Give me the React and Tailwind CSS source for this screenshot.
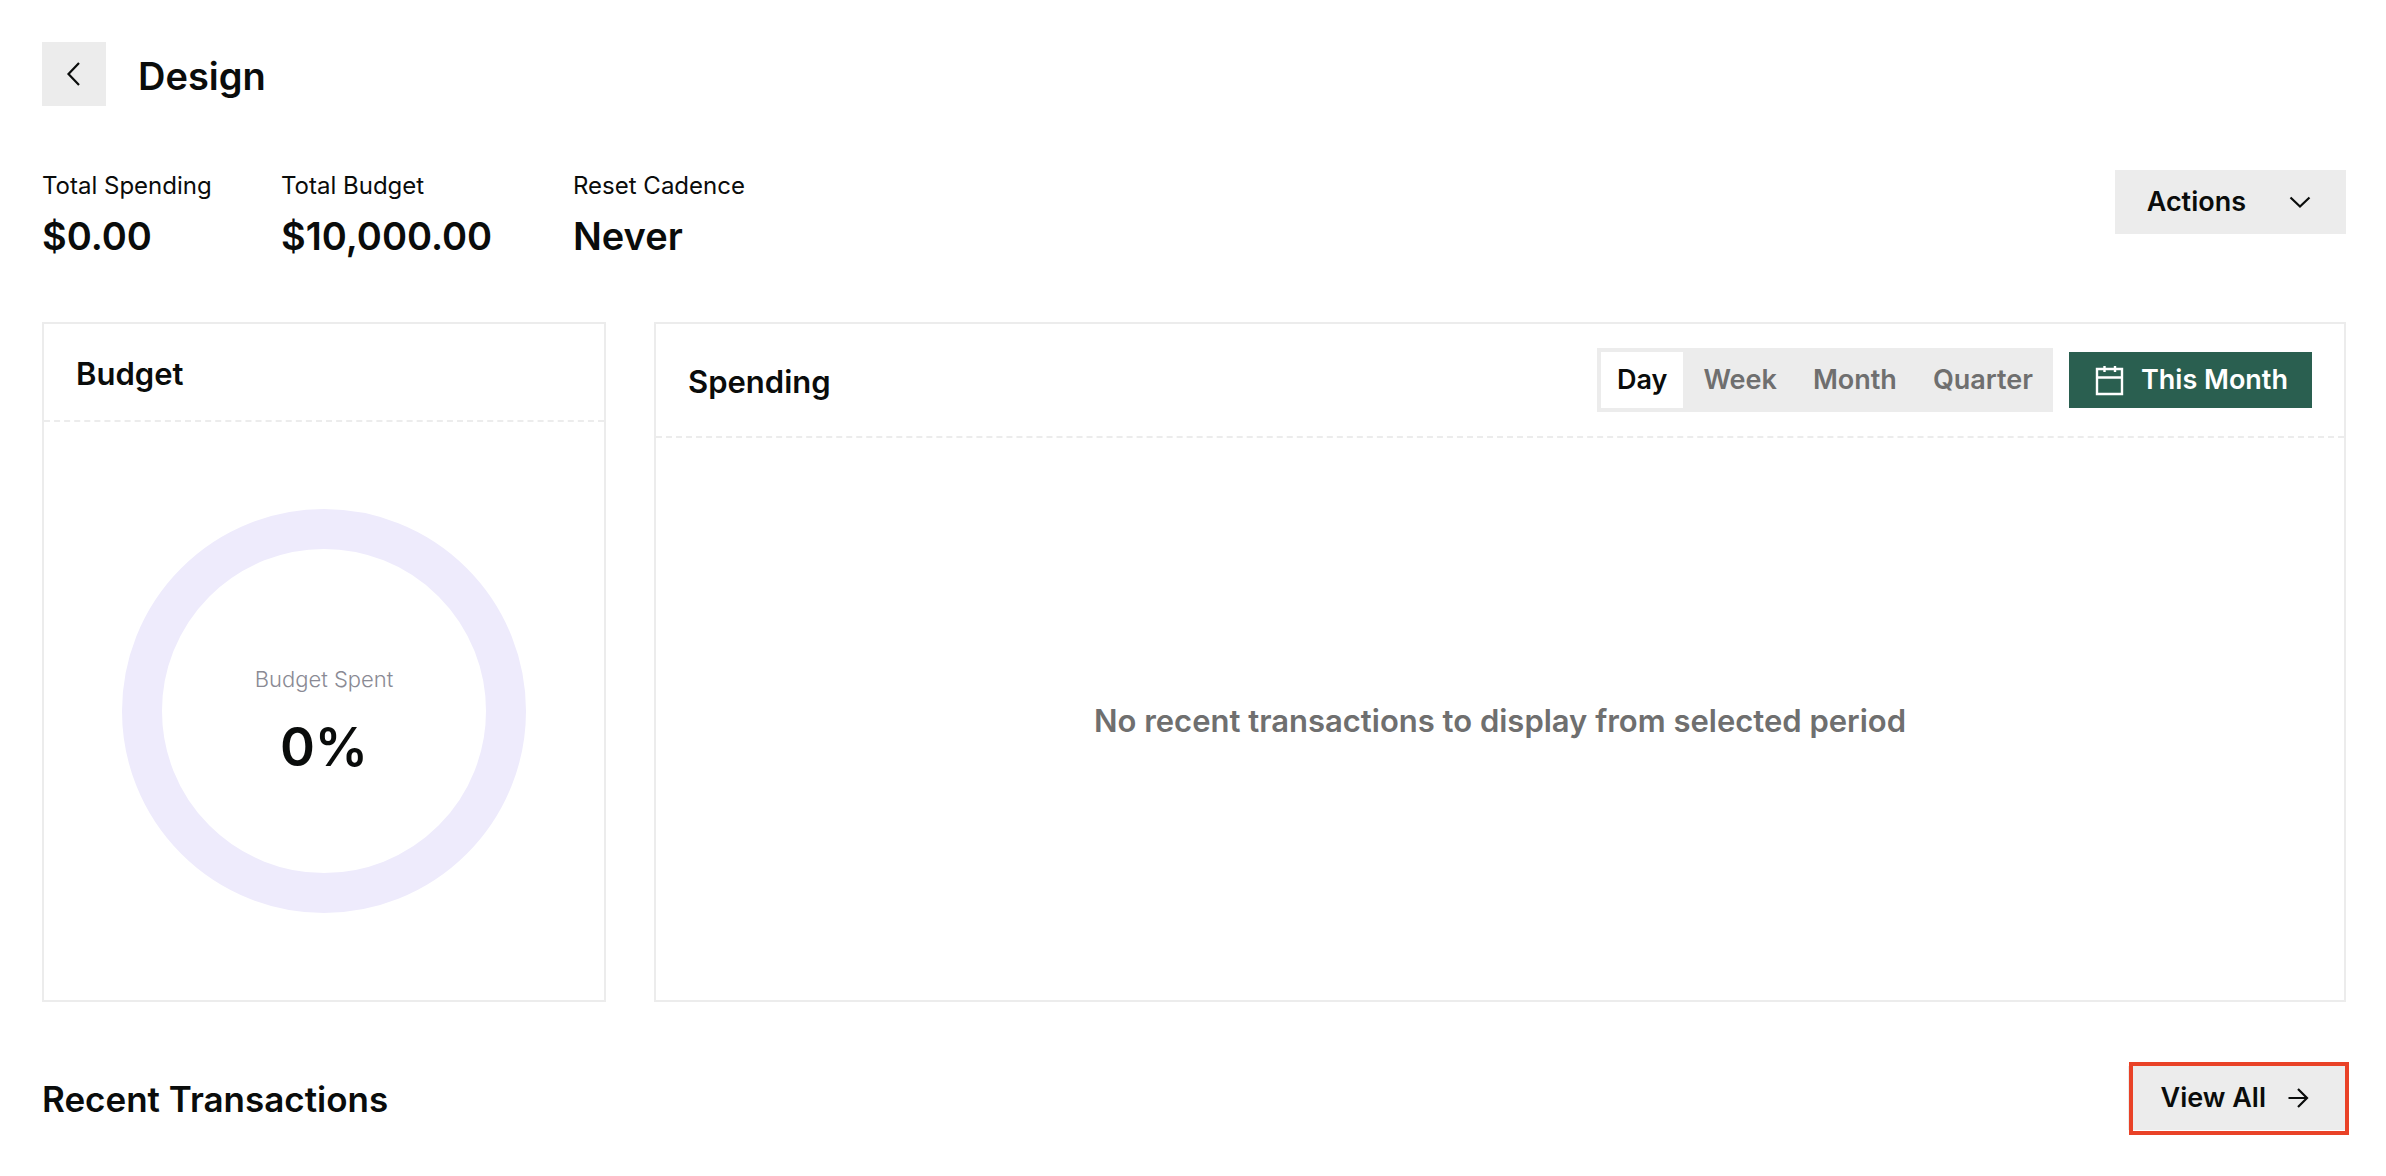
import React, { useState } from 'react';

const stats = [
  { label: 'Total Spending', value: '$0.00', width: 'min-w-[239px]' },
  { label: 'Total Budget', value: '$10,000.00', width: 'min-w-[292px]' },
  { label: 'Reset Cadence', value: 'Never', width: '' },
];

const periods = ['Day', 'Week', 'Month', 'Quarter'];

const ChevronLeft = () => (
  <svg className="size-8" viewBox="0 0 32 32" fill="none" stroke="currentColor" strokeWidth="2.2">
    <path d="M21 5 10.5 16 21 27" />
  </svg>
);

const ChevronDown = () => (
  <svg className="size-8" viewBox="0 0 32 32" fill="none" stroke="currentColor" strokeWidth="2.2">
    <path d="m6.5 11.5 9.5 9 9.5-9" />
  </svg>
);

const ArrowRight = () => (
  <svg className="size-8" viewBox="0 0 32 32" fill="none" stroke="currentColor" strokeWidth="2.2">
    <path d="M6.5 16H25M16 7l9 9-9 9" />
  </svg>
);

const CalendarIcon = () => (
  <svg className="size-8" viewBox="0 0 32 32" fill="none" stroke="currentColor" strokeWidth="2.4">
    <path d="M4 5h25v25H4zM4 13.5h25M11.5 2v6M22 2v6" />
  </svg>
);

const BudgetCard = () => (
  <section className="flex w-[564px] shrink-0 flex-col border-2 border-[#ececec]">
    <header className="border-b-2 border-dashed border-[#ececec] px-8 py-7">
      <h2 className="pt-1 text-[31px] leading-9 font-semibold">Budget</h2>
    </header>
    <div className="relative flex flex-1 items-center justify-center">
      <svg className="size-[404px]" viewBox="0 0 404 404" fill="none">
        <circle cx="202" cy="202" r="182" stroke="#eeebfc" strokeWidth="40" />
      </svg>
      <div className="absolute inset-0 flex flex-col items-center justify-center gap-4 pt-6">
        <p className="text-[22px] leading-8 font-light text-[#8a8a94]">Budget Spent</p>
        <p className="text-[53px] leading-[72px] font-semibold">0%</p>
      </div>
    </div>
  </section>
);

const SpendingCard = () => {
  const [period, setPeriod] = useState('Day');

  return (
    <section className="flex flex-1 flex-col border-2 border-[#ececec]">
      <header className="flex items-center justify-between border-b-2 border-dashed border-[#ececec] px-8 py-6">
        <h2 className="pt-1 text-[31px] leading-9 font-semibold">Spending</h2>
        <div className="flex items-center gap-4">
          <div className="flex gap-1 bg-[#ececec] p-1">
            {periods.map((p) => (
              <button
                key={p}
                type="button"
                onClick={() => setPeriod(p)}
                className={`h-14 px-4 text-[27px] font-semibold ${period === p ? 'bg-white' : 'text-[#6f6f6f]'}`}
              >
                {p}
              </button>
            ))}
          </div>
          <button type="button" className="flex h-14 items-center gap-4 bg-[#2a5f50] px-6 text-[27px] font-semibold text-white">
            <CalendarIcon />
            This Month
          </button>
        </div>
      </header>
      <div className="flex flex-1 items-center justify-center">
        <p className="pt-1 text-[31px] leading-9 font-semibold text-[#6f6f6f]">
          No recent transactions to display from selected period
        </p>
      </div>
    </section>
  );
};

const App = () => {
  return (
    <main className="min-h-screen bg-white pt-[42px] pr-10 pl-[42px] font-['Inter',sans-serif] text-[#0a0c0b]">
      <div className="flex items-center gap-8">
        <button type="button" aria-label="Back" className="flex size-16 items-center justify-center bg-[#ececec]">
          <ChevronLeft />
        </button>
        <h1 className="pt-1 text-[38px] leading-[48px] font-semibold">Design</h1>
      </div>

      <div className="mt-16 flex items-start justify-between">
        <dl className="flex">
          {stats.map((s) => (
            <div key={s.label} className={s.width}>
              <dt className="text-[24px] leading-8">{s.label}</dt>
              <dd className="mt-2.5 text-[38px] leading-[48px] font-semibold">{s.value}</dd>
            </div>
          ))}
        </dl>
        <button type="button" className="flex h-16 items-center gap-9.5 bg-[#ececec] pr-[30px] pl-8 text-[27px] font-semibold">
          Actions
          <ChevronDown />
        </button>
      </div>

      <div className="mt-[62px] flex h-[680px] gap-12">
        <BudgetCard />
        <SpendingCard />
      </div>

      <div className="mt-16 flex items-center justify-between">
        <h2 className="pt-0.5 text-[35px] leading-[48px] font-semibold">Recent Transactions</h2>
        <a href="#transactions" className="relative flex h-16 items-center gap-4 bg-[#ececec] px-8 text-[27px] font-semibold">
          View All
          <ArrowRight />
          <span className="absolute -top-1 -right-[3px] -bottom-[5px] left-px border-4 border-[#e94227]" />
        </a>
      </div>
    </main>
  );
};

export default App;
